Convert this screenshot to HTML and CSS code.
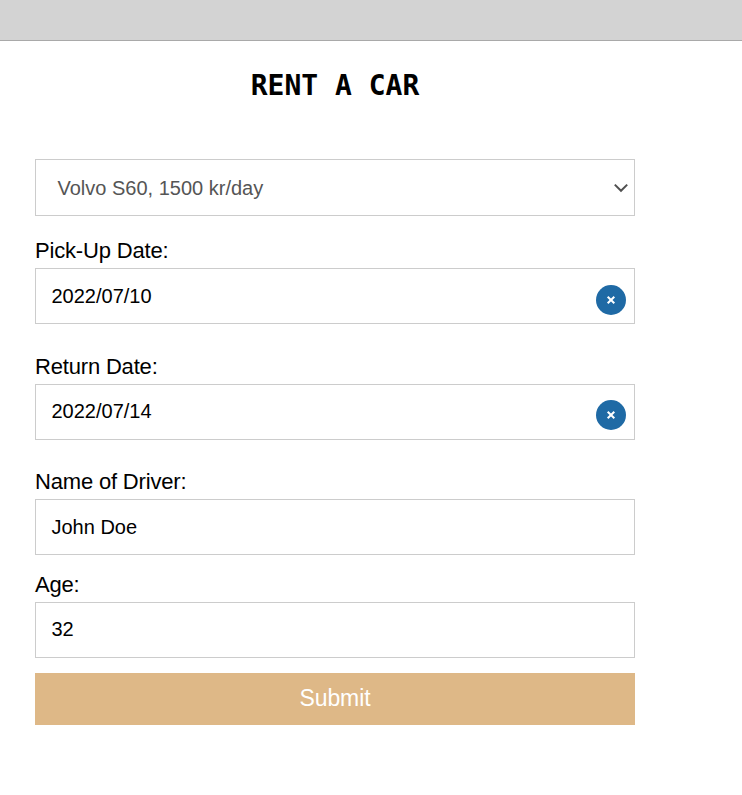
FILE: index.html
```html
<!DOCTYPE html>
<html lang="en">
<head>
<meta charset="utf-8">
<title>Rent a Car</title>
<link rel="stylesheet" href="styles.css">
</head>
<body>
<header class="topbar"></header>
<main class="rental">
  <h1 class="title">RENT A CAR</h1>
  <form class="form">
    <div class="select">
      <span>Volvo S60, 1500 kr/day</span>
      <svg class="chevron" width="16" height="10" viewBox="0 0 16 10"><path d="M1.8 1.6 8 7.8l6.2-6.2" fill="none" stroke="#505050" stroke-width="2"/></svg>
    </div>
    <div class="field pickup">
      <label class="label">Pick-Up Date:</label>
      <div class="control">2022/07/10
        <button class="clear" type="button" aria-label="Clear"><svg width="10" height="10" viewBox="0 0 10 10"><path d="M1.7 1.7l6.6 6.6m0-6.6l-6.6 6.6" stroke="#fff" stroke-width="2"/></svg></button>
      </div>
    </div>
    <div class="field return">
      <label class="label">Return Date:</label>
      <div class="control raised">2022/07/14
        <button class="clear" type="button" aria-label="Clear"><svg width="10" height="10" viewBox="0 0 10 10"><path d="M1.7 1.7l6.6 6.6m0-6.6l-6.6 6.6" stroke="#fff" stroke-width="2"/></svg></button>
      </div>
    </div>
    <div class="field driver">
      <label class="label">Name of Driver:</label>
      <div class="control">John Doe</div>
    </div>
    <div class="field age">
      <label class="label">Age:</label>
      <div class="control raised">32</div>
    </div>
    <button class="submit" type="button">Submit</button>
  </form>
</main>
</body>
</html>
```

FILE: styles.css
```css
* { box-sizing: border-box; }
body { margin: 0; background: #fff; color: #000; font-family: "Liberation Sans", Arial, sans-serif; }
.topbar { height: 41px; background: #d3d3d3; border-bottom: 1px solid #a9a9a9; }
.rental { width: 600px; margin-left: 35px; }
.title { margin: 0; padding-top: 27px; height: 118px; text-align: center; font: bold 28px/36px "DejaVu Sans Mono", monospace; }
.form { display: flex; flex-direction: column; }
.select { display: flex; align-items: center; justify-content: space-between; height: 57px; padding: 0 5px 0 21.5px; border: 1px solid #ccc; color: #555; font-size: 20px; }
.select span { padding-top: 2px; }
.label { display: block; height: 31px; padding-top: 1px; font-size: 22px; line-height: 26px; letter-spacing: -.18px; }
.pickup { margin-top: 21px; }
.return { margin-top: 29px; }
.driver { margin-top: 28px; }
.age { margin-top: 16px; }
.control { display: flex; align-items: center; justify-content: space-between; height: 56px; padding: 0 8px 0 15.5px; border: 1px solid #ccc; font-size: 20px; }
.raised { padding-bottom: 2px; }
.clear { display: grid; place-items: center; width: 30px; height: 30px; padding: 0; margin-top: 8px; border: 0; border-radius: 50%; background: #1f6aa5; }
.submit { height: 52px; margin-top: 15px; padding: 0 0 2px; border: 0; background: #deb887; color: #fff; font: 23px "Liberation Sans", Arial, sans-serif; letter-spacing: -.1px; }
```
